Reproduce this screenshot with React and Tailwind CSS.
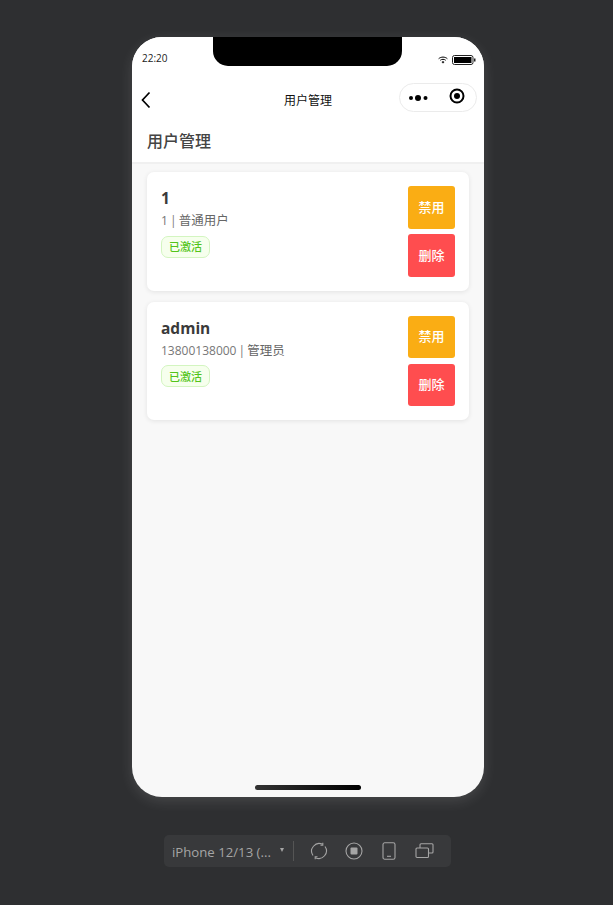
import React from "react";

function Card({ name, digits, role, mt }) {
  return (
    <div className={`mx-[15px] ${mt} flex h-[118.7px] justify-between rounded-[7px] bg-white px-[14px] pt-[14px] shadow-[0_1px_5px_rgba(0,0,0,0.09)]`}>
      <div className="flex flex-col items-start">
        <div className="h-[24px] text-[15.5px] font-bold leading-[24px] text-[#3a3a3a]">{name}</div>
        <div className="mt-[1px] h-[20px] text-[12px] leading-[20px] text-[#777] [word-spacing:-1px]">
          {digits} | <span className="text-[12.5px] text-[#666]">{role}</span>
        </div>
        <div className="mt-[4.5px] flex h-[22px] w-[49px] items-center justify-center rounded-[7px] border border-[#d3f5c0] bg-[#f6ffed] text-[11px] font-medium leading-none text-[#52c41a]">已激活</div>
      </div>
      <div className="flex w-[47px] flex-col gap-[5.3px]">
        <div className="flex h-[42.7px] items-center justify-center rounded-[3px] bg-[#faad14] text-[13px] font-medium text-white">禁用</div>
        <div className="flex h-[42.7px] items-center justify-center rounded-[3px] bg-[#ff4d4f] text-[13px] font-medium text-white">删除</div>
      </div>
    </div>
  );
}

export default function App() {
  return (
    <div className="flex h-[905px] w-[613px] flex-col items-start overflow-hidden bg-[#2e2f31] pl-[132px] pt-[37px] font-['Open_Sans','Noto_Sans_CJK_SC',sans-serif]">
      <div className="relative flex h-[760px] w-[352px] flex-col overflow-hidden rounded-[30px] bg-[#f8f8f8] shadow-[0_4px_14px_rgba(255,255,255,0.12)]">
        <div className="bg-white">
          <div className="flex h-[44px] items-start justify-between pl-[10px] pr-[8px] pt-[14px]">
            <span className="text-[10px] leading-[14px] text-[#222]">22:20</span>
            <div className="mt-[4px] flex items-center gap-[4px]">
              <svg width="10" height="8" viewBox="0 0 11 8" fill="none" stroke="#000">
                <path d="M0.7 2.6C3.4 0.2 7.6 0.2 10.3 2.6" strokeWidth="1.1" />
                <path d="M2.5 4.3C4.2 2.9 6.8 2.9 8.5 4.3" strokeWidth="1.1" />
                <path d="M4.2 6.1L5.5 7.6L6.8 6.1C6 5.5 5 5.5 4.2 6.1Z" fill="#000" strokeWidth="0.4" />
              </svg>
              <svg width="24" height="10" viewBox="0 0 24 10">
                <rect x="0.5" y="0.5" width="20.5" height="9" rx="2" fill="none" stroke="#222" />
                <rect x="2" y="2" width="17.5" height="6" fill="#000" />
                <rect x="22" y="3.5" width="1.5" height="3" fill="#222" />
              </svg>
            </div>
          </div>
          <div className="relative flex h-[39px] items-center justify-center">
            <svg className="absolute left-[8px] top-[10px]" width="12" height="18" viewBox="0 0 12 18" fill="none" stroke="#000" strokeWidth="1.7">
              <path d="M9.5 1.5L2.5 9L9.5 16.5" />
            </svg>
            <span className="text-[12px] leading-none text-[#111]">用户管理</span>
            <div className="absolute right-[7px] top-[2px] flex h-[29px] w-[78px] items-center rounded-full border border-[#ebebeb] bg-white">
              <svg className="ml-[8px]" width="21" height="8" viewBox="0 0 21 8" fill="#000">
                <circle cx="3" cy="4" r="2" />
                <circle cx="10" cy="4" r="3" />
                <circle cx="17.5" cy="4" r="2" />
              </svg>
              <svg className="ml-[20px] mt-[-3px]" width="16" height="16" viewBox="0 0 16 16">
                <circle cx="8" cy="8" r="6.5" fill="none" stroke="#000" strokeWidth="2" />
                <circle cx="8" cy="8" r="3" fill="#000" />
              </svg>
            </div>
          </div>
          <div className="flex h-[44px] items-start border-b-2 border-[#f0f0f0] pl-[15px] pt-[8.5px]">
            <span className="text-[16px] font-medium leading-[24px] text-[#444]">用户管理</span>
          </div>
        </div>
        <Card name="1" digits="1" role="普通用户" mt="mt-[8px]" />
        <Card name="admin" digits="13800138000" role="管理员" mt="mt-[11px]" />
        <div className="absolute bottom-[7px] left-[123px] h-[5px] w-[106px] rounded-full bg-[linear-gradient(90deg,#333,#000)]" />
        <div className="absolute left-[81px] top-0 h-[29px] w-[189px] rounded-b-[15px] bg-black" />
      </div>
      <div className="ml-[32px] mt-[38px] flex h-[32px] w-[287px] items-center rounded-[5px] bg-[#38393b] pl-[8px] text-[#a5a5a5]">
        <span className="mt-[3px] w-[101px] text-[13.2px] leading-none">iPhone 12/13 (...</span>
        <span className="mb-[2px] ml-[7px] h-0 w-0 border-x-[2.5px] border-t-[4px] border-x-transparent border-t-[#a5a5a5]" />
        <span className="ml-[9px] h-[20px] w-px bg-[#555]" />
        <svg className="ml-[16px]" width="18" height="18" viewBox="0 0 18 18" fill="none" stroke="#a5a5a5" strokeWidth="1.1">
          <path d="M3 13.5A7.6 7.6 0 0 1 12.5 2.3" />
          <path d="M15 4.5A7.6 7.6 0 0 1 5.5 15.7" />
          <path d="M12.8 0.8V3.2H10.5" />
          <path d="M5.2 17.2V14.8H7.5" />
        </svg>
        <svg className="ml-[17px]" width="18" height="18" viewBox="0 0 18 18" fill="none" stroke="#a5a5a5" strokeWidth="1.1">
          <circle cx="9" cy="9" r="8" />
          <rect x="5.5" y="5.5" width="7" height="7" rx="1" fill="#a5a5a5" stroke="none" />
        </svg>
        <svg className="ml-[19px]" width="14" height="18" viewBox="0 0 14 18" fill="none" stroke="#a5a5a5" strokeWidth="1.1">
          <rect x="1" y="0.8" width="12" height="16.4" rx="1.8" />
          <path d="M5 14.3H9" />
        </svg>
        <svg className="ml-[19px]" width="19" height="16" viewBox="0 0 19 16" fill="none" stroke="#a5a5a5" strokeWidth="1.1">
          <path d="M5 5V1.8C5 1.2 5.4 0.8 6 0.8H17C17.6 0.8 18 1.2 18 1.8V9C18 9.6 17.6 10 17 10H13.5" />
          <rect x="1" y="5" width="12.5" height="9.5" rx="1" />
        </svg>
      </div>
    </div>
  );
}
